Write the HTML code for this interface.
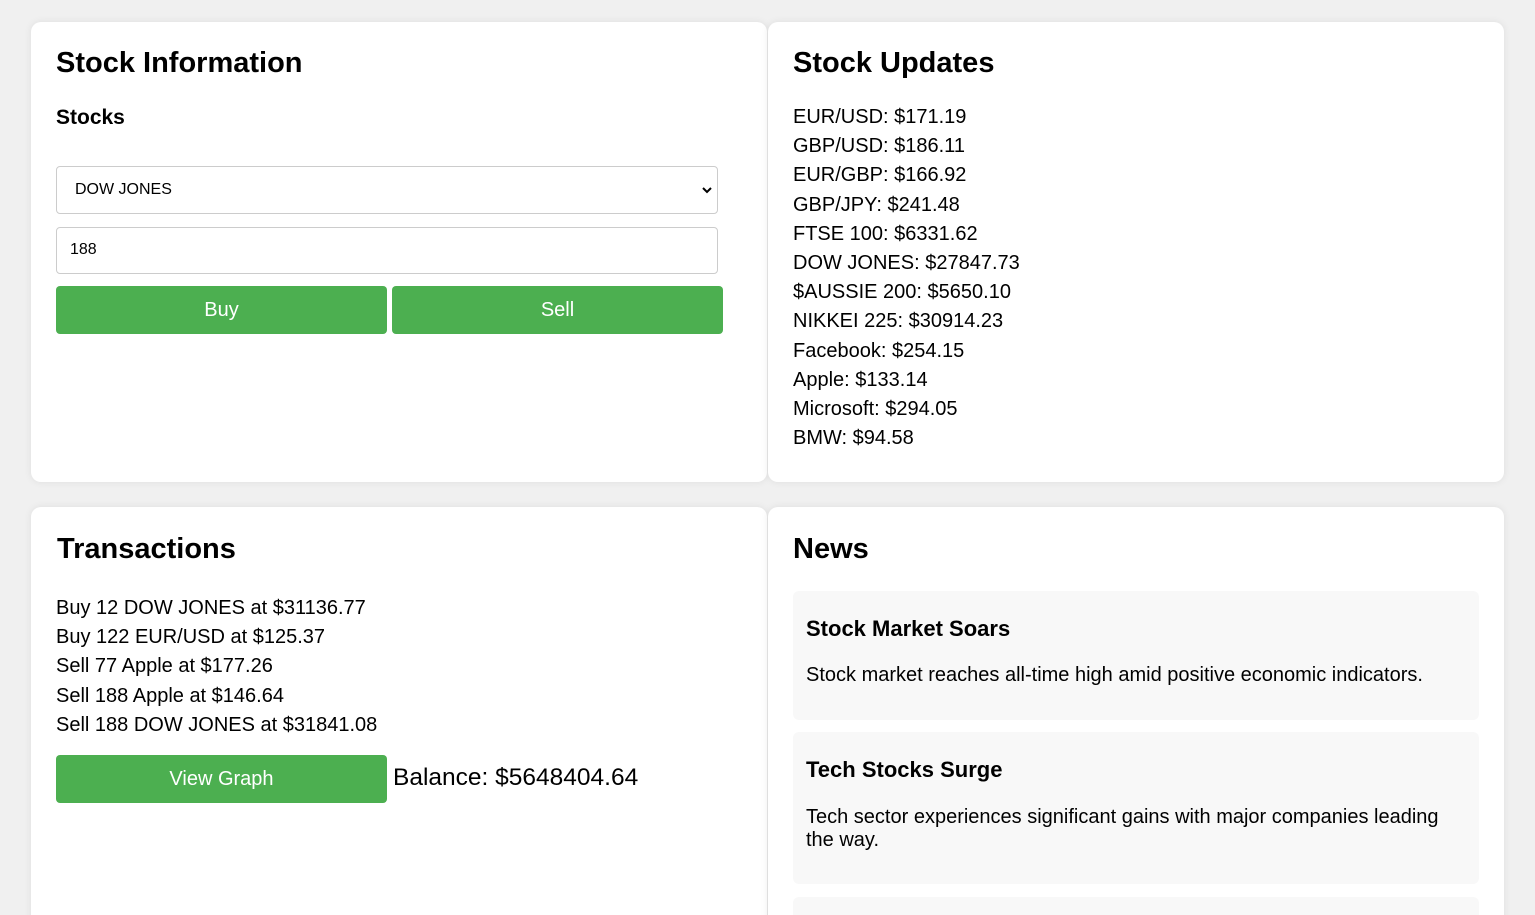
<!DOCTYPE html>
<html style="overflow:hidden;height:915px"><head><style>
body{margin:0;background:#f0f0f0;font-family:"Liberation Sans",Arial,sans-serif;color:#000;width:1535px;height:915px;overflow:hidden;position:relative}
.card{position:absolute;background:#fff;border-radius:10px;box-shadow:0 0 8px rgba(0,0,0,0.08)}
.a{position:absolute;white-space:nowrap}
h1{position:absolute;margin:0;font-size:29px;font-weight:bold;line-height:34px}
.btn{position:absolute;background:#4caf50;color:#fff;border-radius:4px;font-size:20px;display:flex;align-items:center;justify-content:center}
.box{position:absolute;border:1px solid #ccc;border-radius:4px;box-sizing:border-box;background:#fff}
.list{position:absolute;font-size:20px;line-height:29.2px}
.news{position:absolute;left:25px;width:686px;background:#f8f8f8;border-radius:6px}
.news b{position:absolute;left:13px;font-size:22px}
.news p{position:absolute;left:13px;margin:0;font-size:20px;line-height:23px;width:650px}
</style></head><body>
<div class="card" style="left:31px;top:22px;width:736px;height:460px">
<h1 style="left:25px;top:24px">Stock Information</h1>
<div class="a" style="left:25px;top:84px;font-size:21px;font-weight:bold">Stocks</div>
<div class="box" style="left:25px;top:144px;width:662px;height:48px"><span class="a" style="left:18px;top:14px;font-size:16px">DOW JONES</span>
<svg class="a" style="right:4px;top:18px" width="12" height="10" viewBox="0 0 12 10"><path d="M2 3l4 4 4-4" stroke="#000" stroke-width="2" fill="none"/></svg></div>
<div class="box" style="left:25px;top:205px;width:662px;height:47px"><span class="a" style="left:13px;top:13px;font-size:16px">188</span></div>
<div class="btn" style="left:25px;top:264px;width:331px;height:48px">Buy</div>
<div class="btn" style="left:361px;top:264px;width:331px;height:48px">Sell</div>
</div>
<div class="card" style="left:768px;top:22px;width:736px;height:460px">
<h1 style="left:25px;top:24px">Stock Updates</h1>
<div class="list" style="left:25px;top:81px">EUR/USD: $171.19<br>GBP/USD: $186.11<br>EUR/GBP: $166.92<br>GBP/JPY: $241.48<br>FTSE 100: $6331.62<br>DOW JONES: $27847.73<br>$AUSSIE 200: $5650.10<br>NIKKEI 225: $30914.23<br>Facebook: $254.15<br>Apple: $133.14<br>Microsoft: $294.05<br>BMW: $94.58</div>
</div>
<div class="card" style="left:31px;top:507px;width:736px;height:430px">
<h1 style="left:26px;top:25px">Transactions</h1>
<div class="list" style="left:25px;top:87px">Buy 12 DOW JONES at $31136.77<br>Buy 122 EUR/USD at $125.37<br>Sell 77 Apple at $177.26<br>Sell 188 Apple at $146.64<br>Sell 188 DOW JONES at $31841.08</div>
<div class="btn" style="left:25px;top:248px;width:331px;height:48px">View Graph</div>
<div class="a" style="left:362px;top:257px;font-size:24.5px">Balance: $5648404.64</div>
</div>
<div class="card" style="left:768px;top:507px;width:736px;height:430px">
<h1 style="left:25px;top:25px">News</h1>
<div class="news" style="top:84px;height:129px"><b style="top:25px">Stock Market Soars</b><p style="top:73px">Stock market reaches all-time high amid positive economic indicators.</p></div>
<div class="news" style="top:225px;height:152px"><b style="top:25px">Tech Stocks Surge</b><p style="top:74px">Tech sector experiences significant gains with major companies leading the way.</p></div>
<div class="news" style="top:390px;height:60px"></div>
</div>
</body></html>
